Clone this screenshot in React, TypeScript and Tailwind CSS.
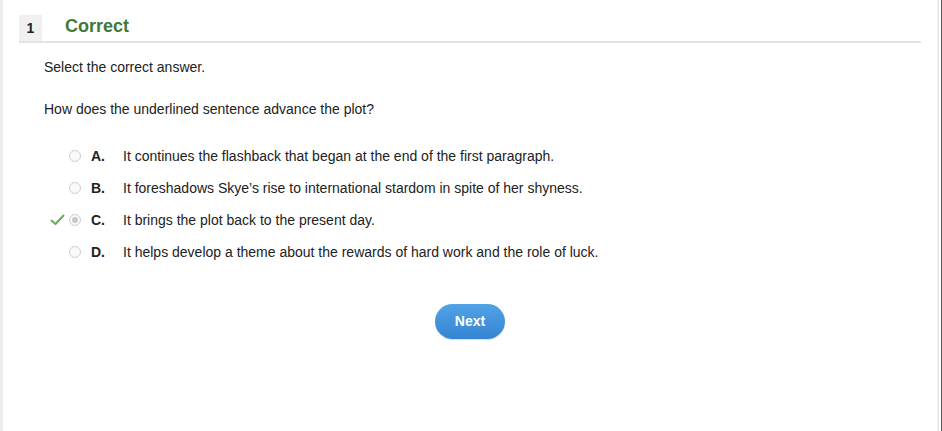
import React from 'react';

const options = [
  { letter: 'A.', text: 'It continues the flashback that began at the end of the first paragraph.' },
  { letter: 'B.', text: 'It foreshadows Skye\u2019s rise to international stardom in spite of her shyness.' },
  { letter: 'C.', text: 'It brings the plot back to the present day.', correct: true },
  { letter: 'D.', text: 'It helps develop a theme about the rewards of hard work and the role of luck.' },
];

const App = () => {
  return (
    <div className="h-[431px] w-[942px] flex bg-white text-[#222] font-['Liberation_Sans',Arial,sans-serif] overflow-hidden">
      <div className="w-[3px] bg-[#ececec]" />
      <div className="flex-1 flex flex-col pl-[16px] pr-[16px] pt-[15px]">
        {/* Header */}
        <div className="flex items-stretch h-[28px] border-b-2 border-[#e4e4e4]">
          <div className="w-[23px] bg-[#f0f0f0] flex items-center justify-center text-[14px] font-bold text-[#222]">
            1
          </div>
          <div className="pl-[23px] text-[18px] leading-[20px] font-bold text-[#3e7a3a] mt-[1px]">Correct</div>
        </div>

        <div className="pl-[25px]">
          <p className="text-[14px] mt-[14px] leading-[20px]">Select the correct answer.</p>
          <p className="text-[14px] mt-[22px] leading-[20px]">How does the underlined sentence advance the plot?</p>

          <div className="mt-[27px] flex flex-col gap-[12px]">
            {options.map((o) => (
              <div key={o.letter} className="flex items-center h-[20px]">
                <div className="w-[25px] flex items-center">
                  {o.correct && (
                    <svg width="15" height="12" viewBox="0 0 15 12" className="ml-[6px]">
                      <path d="M1.5 6.5 L5.5 10 L13.5 1.5" fill="none" stroke="#6aaa5c" strokeWidth="2" strokeLinecap="round" strokeLinejoin="round" />
                    </svg>
                  )}
                </div>
                <div className="w-[12px] h-[12px] rounded-full border border-[#cfcfcf] bg-[#fafafa] flex items-center justify-center">
                  {o.correct && <div className="w-[6px] h-[6px] rounded-full bg-[#c8c8c8]" />}
                </div>
                <span className="ml-[10px] w-[32px] text-[14px] font-bold">{o.letter}</span>
                <span className="text-[14px]">{o.text}</span>
              </div>
            ))}
          </div>
        </div>

        <div className="flex justify-center mt-[42px]">
          <button className="w-[70px] h-[35px] rounded-full bg-gradient-to-b from-[#52a3e6] to-[#3484d2] text-white text-[14px] font-bold shadow-[0_1px_1px_rgba(0,0,0,0.15)]">
            Next
          </button>
        </div>
      </div>
      <div className="w-[5px] flex">
        <div className="w-[1px] bg-[#f3f3f3]" />
        <div className="w-[1px] bg-[#e6e6e6]" />
        <div className="w-[2px] bg-white" />
        <div className="w-[1px] bg-[#555]" />
      </div>
    </div>
  );
};

export default App;
